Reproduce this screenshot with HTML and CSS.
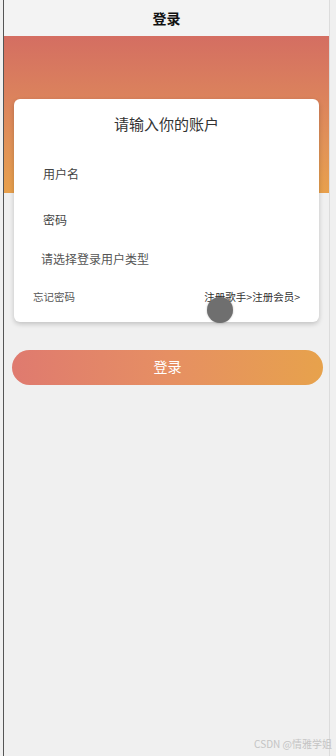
FILE: index.html
```html
<!DOCTYPE html>
<html lang="zh-CN">
<head>
    <meta charset="UTF-8">
    <meta name="viewport" content="width=device-width, initial-scale=1.0">
    <title>登录</title>
    <link rel="stylesheet" href="styles.css">
</head>
<body>
    <div class="frame">
        <div class="header">登录</div>

        <div class="banner"></div>

        <div class="card">
            <h2>请输入你的账户</h2>
            <div class="field">用户名</div>
            <div class="field">密码</div>
            <div class="field select">请选择登录用户类型</div>
            <div class="links">
                <span>忘记密码</span>
                <span>注册歌手&gt;注册会员&gt;</span>
            </div>
            <div class="touch"></div>
        </div>

        <button class="login">登录</button>

        <div class="mark">CSDN @情雅学姐</div>
    </div>
</body>
</html>
```

FILE: styles.css
```css
body {
    margin: 0;
    padding: 0;
    background-color: #f0f0f0;
    font-family: "Noto Sans CJK SC", "Noto Sans", sans-serif;
}

/* moldura do telefone */
.frame {
    position: relative;
    margin-left: 3px;
    width: 327px;
    height: 756px;
    border-left: 1px solid #555;
    border-right: 1px solid #dcdcdc;
    background-color: #f0f0f0;
    box-sizing: border-box;
}

.header {
    height: 36px;
    line-height: 36px;
    text-align: center;
    font-size: 14px;
    font-weight: bold;
    color: #111;
    background-color: #f3f3f3;
}

.banner {
    height: 157px;
    background: linear-gradient(to bottom, #d46e62, #e19358 70%, #e8a04c);
}

.card {
    position: relative;
    margin: -94px 10px 0 10px;
    height: 223px;
    background-color: white;
    border-radius: 6px;
    box-shadow: 0 2px 5px rgba(0, 0, 0, 0.2);
    padding-top: 14px;
    box-sizing: border-box;
}

.card h2 {
    margin: 0 0 29px 0;
    font-size: 15px;
    font-weight: normal;
    text-align: center;
    color: #333;
    line-height: 22px;
}

.field {
    padding-left: 29px;
    font-size: 12px;
    color: #444;
    height: 46px;
    line-height: 20px;
}

.field.select {
    padding-left: 27px;
    height: 40px;
    margin-top: -7px;
    color: #555;
}

.links {
    display: flex;
    justify-content: space-between;
    padding: 0 19px;
    font-size: 10.5px;
    line-height: 16px;
    color: #555;
}

.links span:last-child {
    color: #333;
}

.touch {
    position: absolute;
    left: 193px;
    top: 198px;
    width: 26px;
    height: 26px;
    border-radius: 50%;
    background-color: #6f6f6f;
    box-shadow: 0 0 2px rgba(0, 0, 0, 0.3);
}

.login {
    display: block;
    margin: 28px 0 0 8px;
    width: 311px;
    height: 35px;
    border: none;
    border-radius: 18px;
    background: linear-gradient(to right, #df7a6f, #e68f63 50%, #e7a24c);
    color: white;
    font-size: 14px;
    line-height: 31px;
    padding: 0 0 2px 0;
    font-family: "Noto Sans CJK SC", sans-serif;
}

.mark {
    position: absolute;
    right: -3px;
    bottom: 5px;
    font-size: 10px;
    color: #c4c4c4;
}
```
